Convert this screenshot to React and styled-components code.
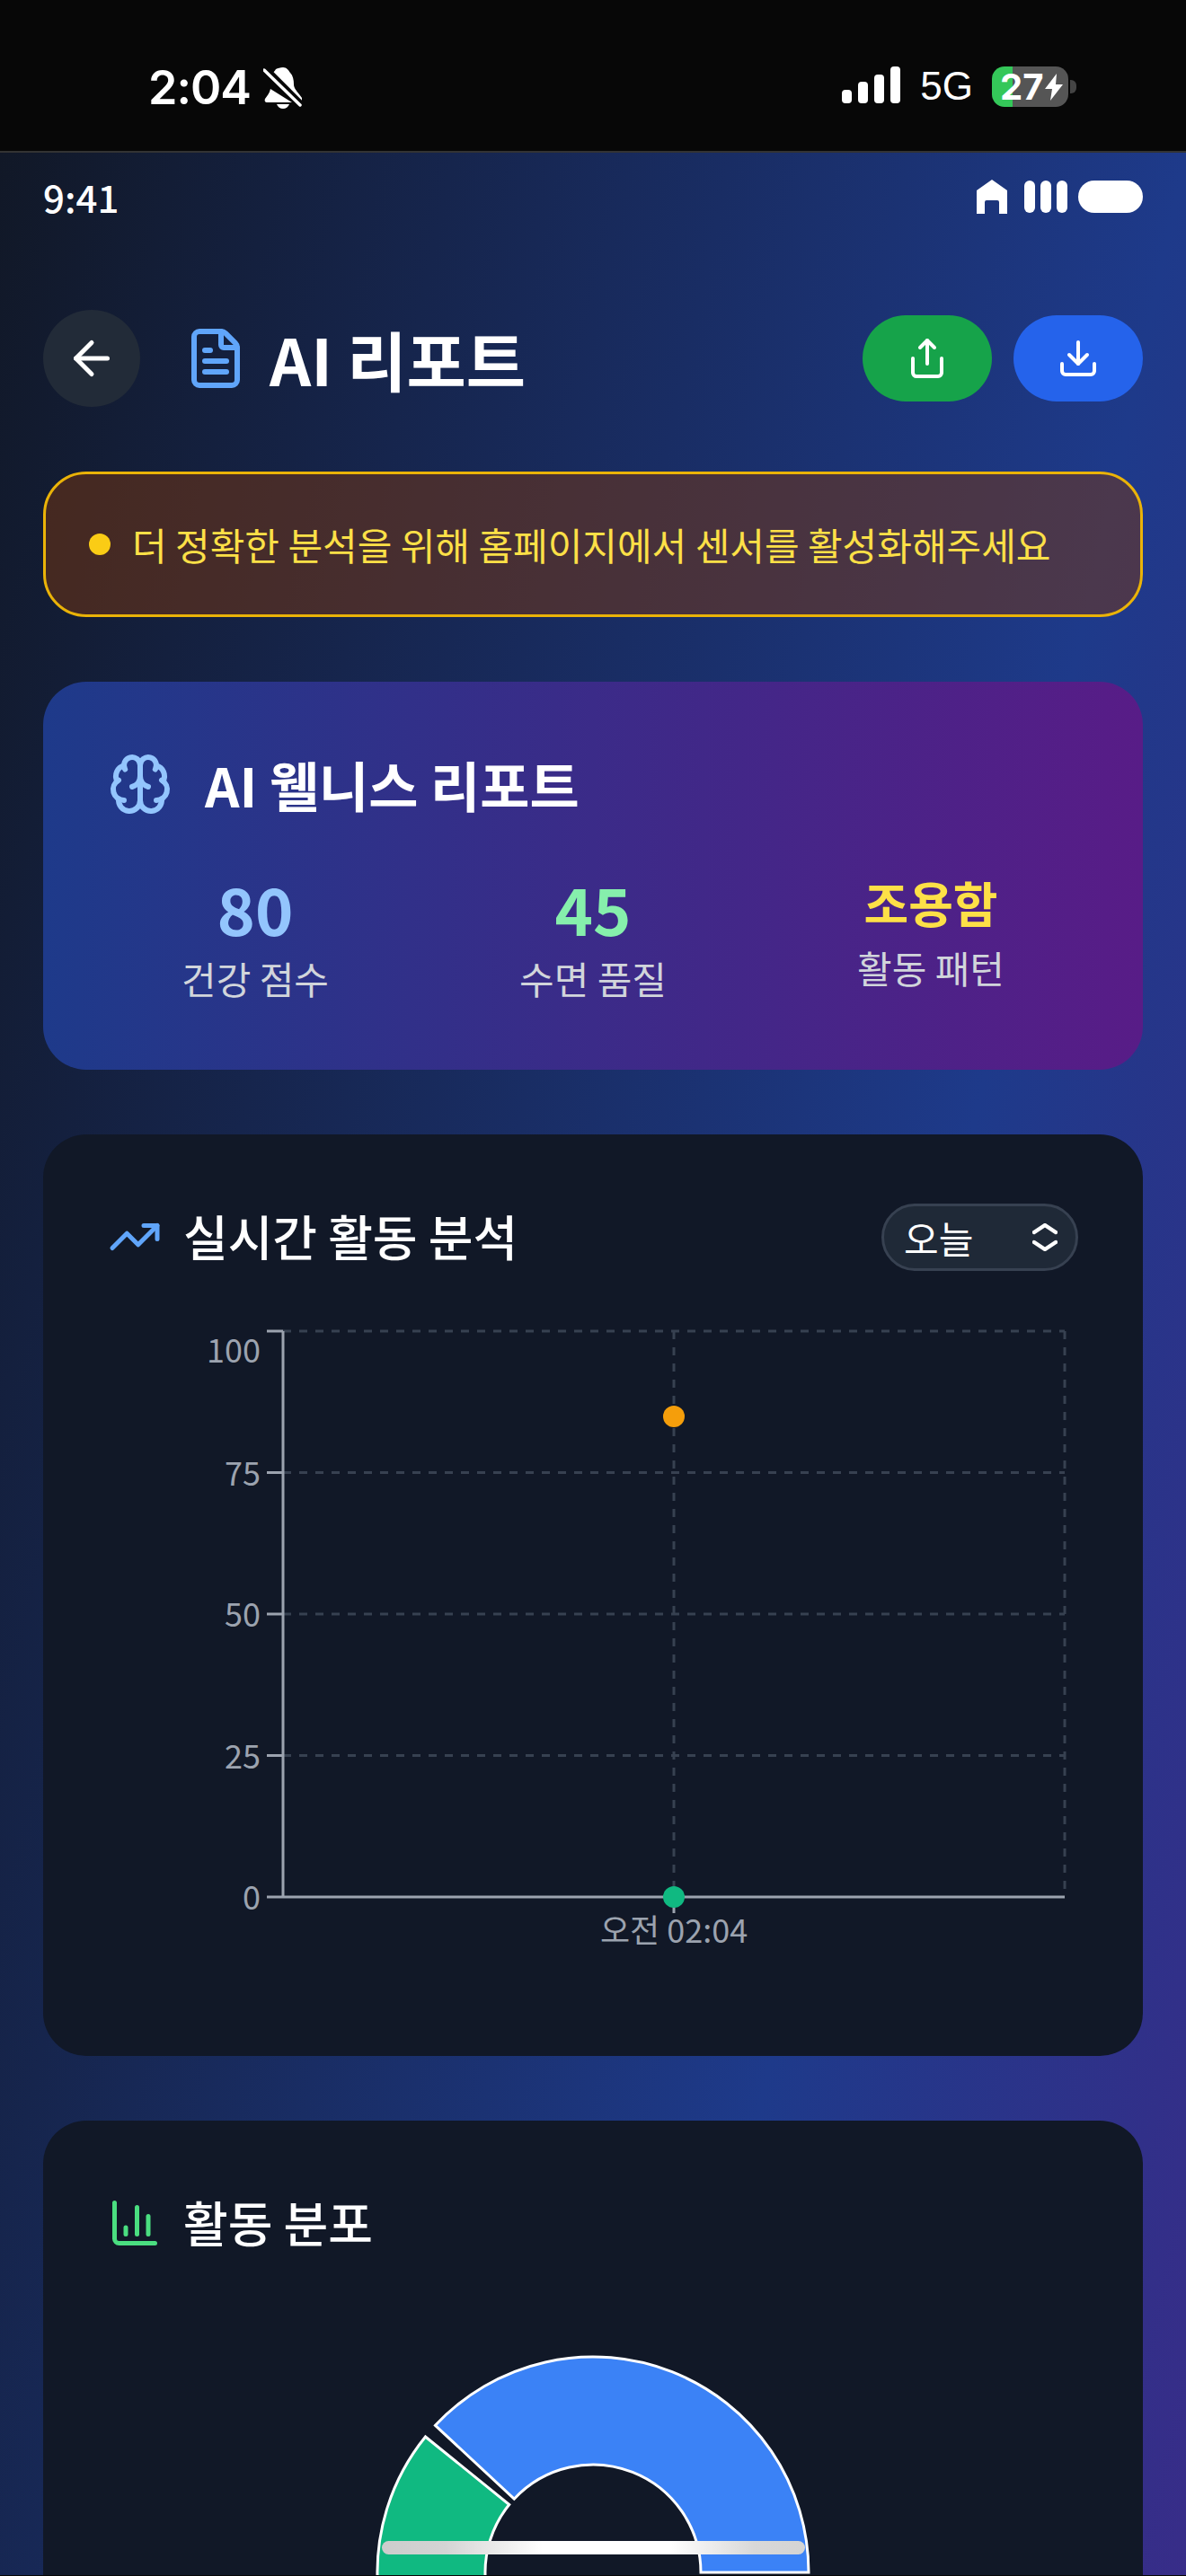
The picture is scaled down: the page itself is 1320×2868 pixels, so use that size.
import React from "react";
import styled, { createGlobalStyle } from "styled-components";
import { ArrowLeft, FileText, Share, Download, Brain, TrendingUp, ChartColumn } from "lucide-react";

const GlobalStyle = createGlobalStyle`
  html, body {
    margin: 0;
    padding: 0;
    background: #070707;
  }
  * {
    box-sizing: border-box;
  }
`;

const Page = styled.div`
  position: relative;
  width: 1320px;
  height: 2868px;
  overflow: hidden;
  background: #070707;
  font-family: "Noto Sans CJK KR", "Noto Sans", sans-serif;
  color: #fff;
`;

const SystemBar = styled.div`
  height: 170px;
  display: flex;
  justify-content: space-between;
  padding: 74px 122px 0 165px;
  border-bottom: 2px solid #333;
  font-family: Inter, "Liberation Sans", sans-serif;
`;

const SystemLeft = styled.div`
  display: flex;
  align-items: flex-start;
  gap: 14px;
`;

const SystemTime = styled.span`
  font-size: 52px;
  line-height: 48px;
  font-weight: 600;
  letter-spacing: -1px;
`;

const SystemRight = styled.div`
  display: flex;
  align-items: flex-start;
`;

const NetworkLabel = styled.span`
  font-size: 44px;
  line-height: 44px;
  margin: 0 21px 0 22px;
  font-family: "Liberation Sans", sans-serif;
`;

const Battery = styled.div`
  width: 85px;
  height: 45px;
  border-radius: 14px;
  background: linear-gradient(90deg, #34c759 27%, #555 27%);
  display: flex;
  align-items: center;
  padding-left: 9px;
  gap: 2px;
  font-size: 40px;
  font-weight: 700;
  line-height: 45px;
`;

const BatteryNub = styled.div`
  width: 7px;
  height: 15px;
  margin: 15px 0 0 2px;
  border-radius: 0 6px 6px 0;
  background: #444;
`;

const Screen = styled.div`
  height: 2697px;
  overflow: hidden;
  background: linear-gradient(to bottom right, #111827, #1e3a8a, #581c87) no-repeat;
  background-size: 100% 6055px;
  padding: 30px 48px 0;
`;

const AppStatus = styled.div`
  display: flex;
  justify-content: space-between;
  align-items: center;
  height: 40px;
`;

const AppTime = styled.span`
  font-size: 42px;
  line-height: 40px;
  font-weight: 500;
  padding-bottom: 3px;
`;

const AppStatusIcons = styled.div`
  display: flex;
  align-items: center;
  gap: 12px;
  margin-top: -2px;
`;

const SignalBars = styled.div`
  display: flex;
  gap: 6px;
  margin-left: 7px;
`;

const SignalBar = styled.div`
  width: 12px;
  height: 36px;
  border-radius: 6px;
  background: #fff;
`;

const BatteryPill = styled.div`
  width: 72px;
  height: 36px;
  border-radius: 18px;
  background: #fff;
`;

const Header = styled.header`
  display: flex;
  align-items: center;
  justify-content: space-between;
  margin-top: 105px;
`;

const HeaderLeft = styled.div`
  display: flex;
  align-items: center;
`;

const BackButton = styled.div`
  width: 108px;
  height: 108px;
  border-radius: 50%;
  background: #222b38;
  display: flex;
  align-items: center;
  justify-content: center;
  margin-right: 48px;
`;

const PageTitle = styled.h1`
  margin: 0 0 0 24px;
  font-size: 72px;
  line-height: 96px;
  font-weight: 700;
`;

const HeaderActions = styled.div`
  display: flex;
  gap: 24px;
`;

const ActionButton = styled.div`
  width: 144px;
  height: 96px;
  border-radius: 48px;
  background: ${({ $color }) => $color};
  display: flex;
  align-items: center;
  justify-content: center;
`;

const Notice = styled.div`
  display: flex;
  align-items: center;
  gap: 24px;
  height: 162px;
  margin-top: 72px;
  padding: 0 48px;
  border: 3px solid #eab308;
  border-radius: 48px;
  background: rgba(120, 53, 15, 0.5);
`;

const NoticeDot = styled.div`
  width: 24px;
  height: 24px;
  border-radius: 50%;
  background: #facc15;
  flex: none;
`;

const NoticeText = styled.span`
  font-size: 42px;
  line-height: 60px;
  color: #fde047;
`;

const Hero = styled.section`
  margin-top: 72px;
  padding: 72px;
  border-radius: 48px;
  background: linear-gradient(90deg, #1e3a8a, #581c87);
`;

const HeroTitleRow = styled.div`
  display: flex;
  align-items: center;
  gap: 36px;
  height: 84px;
`;

const HeroTitle = styled.h2`
  margin: 0;
  font-size: 60px;
  line-height: 84px;
  font-weight: 700;
`;

const StatGrid = styled.div`
  display: grid;
  grid-template-columns: repeat(3, 1fr);
  gap: 48px;
  margin-top: 48px;
`;

const Stat = styled.div`
  text-align: center;
`;

const StatValue = styled.div`
  font-size: ${({ $small }) => ($small ? "54px" : "72px")};
  line-height: ${({ $small }) => ($small ? "84px" : "96px")};
  font-weight: 700;
  color: ${({ $color }) => $color};
`;

const StatLabel = styled.div`
  font-size: 42px;
  line-height: 60px;
  color: #d1d5db;
`;

const Card = styled.section`
  margin-top: 72px;
  padding: 72px;
  border-radius: 48px;
  background: #111827;
`;

const CardHeader = styled.div`
  display: flex;
  align-items: center;
  justify-content: space-between;
  height: 84px;
`;

const CardTitleGroup = styled.div`
  display: flex;
  align-items: center;
  gap: 24px;
`;

const CardTitle = styled.h3`
  margin: 0;
  padding-bottom: 3px;
  font-size: 54px;
  line-height: 81px;
  font-weight: 500;
`;

const RangeSelect = styled.div`
  display: flex;
  align-items: center;
  justify-content: space-between;
  width: 219px;
  height: 75px;
  padding: 0 20px 0 22px;
  border: 3px solid #374151;
  border-radius: 38px;
  background: #1f2937;
  font-size: 42px;
`;

const ChartFrame = styled.svg`
  display: block;
  margin: 57px -72px 0;
`;

const AxisText = styled.text`
  font-size: 36px;
  fill: #9ca3af;
  font-family: "Noto Sans CJK KR", sans-serif;
`;

const HomeBar = styled.div`
  position: absolute;
  left: 425px;
  top: 2829px;
  width: 471px;
  height: 15px;
  border-radius: 8px;
  background: linear-gradient(90deg, #cccccc 0%, #d4d4d4 15%, #ffffff 38%, #ffffff 68%, #d8d8d8 88%, #d4d4d4 100%);
`;

const BellOff = () => (
  <svg width="44" height="48" viewBox="0 0 44 48">
    <path
      fill="#fff"
      d="M22 1c4 0 6 3 8 6 3 3 4 8 4 13 0 4 3 7 6 11l3 4v3l-6 1L8 8c3-1 5-3 6-5 2-1 5-2 8-2zM2 36c2-3 5-6 6-11l24 15H4c-2 0-3-2-2-4zM15 42h14c-1 3-4 5-7 5s-6-2-7-5z"
    />
    <path stroke="#070707" strokeWidth="9" d="M-1 0L44 45" />
    <path stroke="#fff" strokeWidth="3.5" strokeLinecap="round" d="M1 4L41 43" />
  </svg>
);

const CellBars = () => (
  <svg width="65" height="41" viewBox="0 0 65 41" fill="#fff">
    <rect x="0" y="26" width="11" height="15" rx="4" />
    <rect x="18" y="17" width="11" height="24" rx="4" />
    <rect x="36" y="9" width="11" height="32" rx="4" />
    <rect x="54" y="0" width="11" height="41" rx="4" />
  </svg>
);

const Bolt = () => (
  <svg width="20" height="30" viewBox="0 0 20 30" fill="#fff">
    <path d="M13 0L0 17h8L6 30l14-18h-8z" />
  </svg>
);

const HomeGlyph = () => (
  <svg width="34" height="38" viewBox="0 0 34 38" fill="#fff">
    <path d="M17 0L34 12V38H25V25Q25 23 23 23H11Q9 23 9 25V38H0V12z" />
  </svg>
);

const UpDown = () => (
  <svg width="28" height="31" viewBox="0 0 28 31" fill="none" stroke="#fff" strokeWidth="4.5" strokeLinecap="round" strokeLinejoin="round">
    <path d="M2 10L14 2L26 10" />
    <path d="M2 21L14 29L26 21" />
  </svg>
);

const polar = (r, deg) => {
  const a = (deg * Math.PI) / 180;
  return [r * Math.cos(a), -r * Math.sin(a)];
};

const ringSlice = (from, to) => {
  const [ax, ay] = polar(240, from);
  const [bx, by] = polar(240, to);
  const [cx, cy] = polar(120, to);
  const [dx, dy] = polar(120, from);
  return `M${ax} ${ay}A240 240 0 0 0 ${bx} ${by}L${cx} ${cy}A120 120 0 0 1 ${dx} ${dy}Z`;
};

const yTicks = [
  { label: "100", y: 0, textY: 19 },
  { label: "75", y: 157.5, textY: 155.5 },
  { label: "50", y: 315, textY: 313 },
  { label: "25", y: 472.5, textY: 470.5 },
  { label: "0", y: 630, textY: 628 },
];

// recharts-like line chart: coordinates relative to card edge, top is the 100 gridline
const ActivityChart = () => (
  <ChartFrame width="1224" height="741" viewBox="0 -6 1224 741">
    <g stroke="#374151" strokeWidth="3" strokeDasharray="9 9" fill="none">
      {yTicks.slice(0, 4).map((t) => (
        <line key={t.label} x1="267" x2="1137" y1={t.y} y2={t.y} />
      ))}
      <line x1="702" x2="702" y1="0" y2="630" />
      <line x1="1137" x2="1137" y1="0" y2="630" />
    </g>
    <g stroke="#9ca3af" strokeWidth="3">
      <line x1="267" x2="267" y1="0" y2="630" />
      <line x1="267" x2="1137" y1="630" y2="630" />
      <line x1="702" x2="702" y1="630" y2="648" />
      {yTicks.map((t) => (
        <line key={t.label} x1="249" x2="267" y1={t.y} y2={t.y} />
      ))}
    </g>
    {yTicks.map((t) => (
      <AxisText key={t.label} x="242" y={t.textY} textAnchor="end" dominantBaseline="central">
        {t.label}
      </AxisText>
    ))}
    <AxisText x="702" y="665" textAnchor="middle" dominantBaseline="central">
      오전 02:04
    </AxisText>
    <circle cx="702" cy="95" r="12" fill="#f59e0b" />
    <circle cx="702" cy="630" r="12" fill="#10b981" />
  </ChartFrame>
);

const DonutFrame = styled.svg`
  display: block;
  margin: 89px -72px 0;
`;

const DistributionChart = () => (
  <DonutFrame width="1224" height="520" viewBox="-612 -258 1224 520">
    <g stroke="#fff" strokeWidth="3">
      <path d={ringSlice(0, 137)} fill="#3b82f6" />
      <path d={ringSlice(141, 230)} fill="#10b981" />
    </g>
  </DonutFrame>
);

const App = () => {
  return (
    <Page>
      <GlobalStyle />
      <SystemBar>
        <SystemLeft>
          <SystemTime>2:04</SystemTime>
          <BellOff />
        </SystemLeft>
        <SystemRight>
          <CellBars />
          <NetworkLabel>5G</NetworkLabel>
          <Battery>
            27
            <Bolt />
          </Battery>
          <BatteryNub />
        </SystemRight>
      </SystemBar>
      <Screen>
        <AppStatus>
          <AppTime>9:41</AppTime>
          <AppStatusIcons>
            <HomeGlyph />
            <SignalBars>
              <SignalBar />
              <SignalBar />
              <SignalBar />
            </SignalBars>
            <BatteryPill />
          </AppStatusIcons>
        </AppStatus>

        <Header>
          <HeaderLeft>
            <BackButton>
              <ArrowLeft size={60} color="#fff" strokeWidth={2} />
            </BackButton>
            <FileText size={72} color="#60a5fa" strokeWidth={2} />
            <PageTitle>AI 리포트</PageTitle>
          </HeaderLeft>
          <HeaderActions>
            <ActionButton $color="#16a34a">
              <Share size={48} color="#fff" strokeWidth={2} />
            </ActionButton>
            <ActionButton $color="#2563eb">
              <Download size={48} color="#fff" strokeWidth={2} />
            </ActionButton>
          </HeaderActions>
        </Header>

        <Notice>
          <NoticeDot />
          <NoticeText>더 정확한 분석을 위해 홈페이지에서 센서를 활성화해주세요</NoticeText>
        </Notice>

        <Hero>
          <HeroTitleRow>
            <Brain size={72} color="#93c5fd" strokeWidth={2} />
            <HeroTitle>AI 웰니스 리포트</HeroTitle>
          </HeroTitleRow>
          <StatGrid>
            <Stat>
              <StatValue $color="#93c5fd">80</StatValue>
              <StatLabel>건강 점수</StatLabel>
            </Stat>
            <Stat>
              <StatValue $color="#86efac">45</StatValue>
              <StatLabel>수면 품질</StatLabel>
            </Stat>
            <Stat>
              <StatValue $color="#fde047" $small>
                조용함
              </StatValue>
              <StatLabel>활동 패턴</StatLabel>
            </Stat>
          </StatGrid>
        </Hero>

        <Card>
          <CardHeader>
            <CardTitleGroup>
              <TrendingUp size={60} color="#60a5fa" strokeWidth={2} />
              <CardTitle>실시간 활동 분석</CardTitle>
            </CardTitleGroup>
            <RangeSelect>
              오늘
              <UpDown />
            </RangeSelect>
          </CardHeader>
          <ActivityChart />
        </Card>

        <Card>
          <CardHeader>
            <CardTitleGroup>
              <ChartColumn size={60} color="#4ade80" strokeWidth={2} />
              <CardTitle>활동 분포</CardTitle>
            </CardTitleGroup>
          </CardHeader>
          <DistributionChart />
        </Card>
      </Screen>
      <HomeBar />
    </Page>
  );
};

export default App;
